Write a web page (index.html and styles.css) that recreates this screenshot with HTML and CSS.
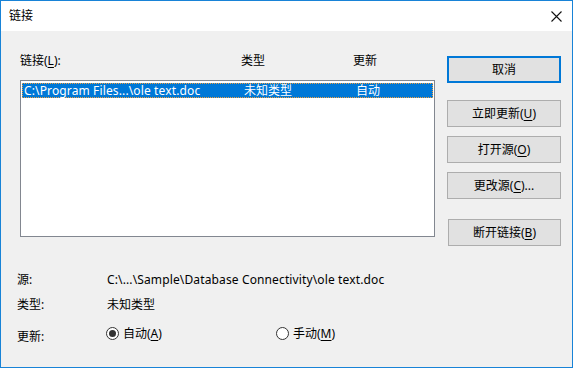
FILE: index.html
```html
<!DOCTYPE html>
<html lang="zh-CN">
<head>
    <meta charset="UTF-8">
    <title>链接</title>
    <link rel="stylesheet" href="styles.css">
</head>
<body>
    <div class="window">
        <div class="titlebar">
            <span class="title">链接</span>
            <span class="close">
                <svg width="11" height="11" viewBox="0 0 11 11"><path d="M0.5 0.5 L10.5 10.5 M10.5 0.5 L0.5 10.5" stroke="#111" stroke-width="1.1" fill="none"/></svg>
            </span>
        </div>

        <div class="client">
            <div class="main">
                <div class="links-panel">
                    <div class="list-header">
                        <span class="col-name">链接(<u>L</u>):</span>
                        <span class="col-type">类型</span>
                        <span class="col-update">更新</span>
                    </div>
                    <div class="list">
                        <div class="row selected">
                            <span class="col-name latin">C:\Program Files...\ole text.doc</span>
                            <span class="col-type">未知类型</span>
                            <span class="col-update">自动</span>
                        </div>
                    </div>
                </div>

                <div class="buttons">
                    <button class="btn default">取消</button>
                    <button class="btn btn-update">立即更新(<u>U</u>)</button>
                    <button class="btn btn-open">打开源(<u>O</u>)</button>
                    <button class="btn btn-change">更改源(<u>C</u>)...</button>
                    <button class="btn btn-break">断开链接(<u>B</u>)</button>
                </div>
            </div>

            <div class="info">
                <span class="info-label">源:</span>
                <span class="info-value latin">C:\...\Sample\Database Connectivity\ole text.doc</span>
                <span class="info-label row-type">类型:</span>
                <span class="info-value row-type">未知类型</span>
                <span class="info-label row-update">更新:</span>
                <div class="info-value row-update radios">
                    <label class="radio checked"><span class="dot"></span>自动(<u>A</u>)</label>
                    <label class="radio"><span class="dot"></span>手动(<u>M</u>)</label>
                </div>
            </div>
        </div>
    </div>
</body>
</html>
```

FILE: styles.css
```css
* {
    margin: 0;
    padding: 0;
    box-sizing: border-box;
}
body {
    font-family: 'Noto Sans', 'Noto Sans CJK SC', sans-serif;
    font-size: 12px;
    line-height: 16px;
    color: #000;
    background: #fff;
}
u {
    text-decoration: underline;
    text-underline-offset: 2px;
}
.latin {
    letter-spacing: 0.13px;
}

.window {
    width: 573px;
    height: 368px;
    border: 1px solid #1883d7;
    display: flex;
    flex-direction: column;
}

.titlebar {
    height: 30px;
    background: #fff;
    display: flex;
    align-items: center;
    justify-content: space-between;
    padding: 0 10px 0 8px;
}
.close {
    display: flex;
}

.client {
    flex: 1;
    background: #f0f0f0;
}

.main {
    display: flex;
    align-items: flex-start;
    padding-top: 22px;
}

.links-panel {
    margin-left: 19px;
    width: 415px;
}
.list-header, .row {
    display: flex;
}
.col-name {
    width: 220px;
}
.col-type {
    width: 112px;
}
.list-header .col-name {
    width: 221px;
}

.list {
    margin-top: 11px;
    height: 157px;
    background: #fff;
    border: 1px solid #828790;
    padding: 1px;
}
.row {
    height: 15px;
    line-height: 13px;
    margin-top: 1px;
    padding-left: 1px;
}
.row.selected {
    background: #0078d7;
    color: #fff;
    border: 1px dotted #f0a040;
}

.buttons {
    margin-left: 12px;
    width: 114px;
    display: flex;
    flex-direction: column;
    padding-top: 3px;
}
.btn {
    height: 27px;
    background: #e1e1e1;
    border: 1px solid #adadad;
    font: inherit;
    color: #000;
}
.btn.default {
    border: 2px solid #0078d7;
}
.btn-update {
    margin-top: 17px;
}
.btn-open, .btn-change {
    margin-top: 9px;
}
.btn-break {
    margin-top: 20px;
    margin-left: 1px;
}

.info {
    display: grid;
    grid-template-columns: 90px 1fr;
    grid-template-rows: 16px 16px 16px;
    row-gap: 9px;
    margin: 26px 0 0 16px;
}
.row-update {
    margin-top: 7px;
}
.radios {
    display: flex;
    margin-left: -1px;
}
.radio {
    display: flex;
    align-items: center;
    width: 170px;
}
.dot {
    width: 13px;
    height: 13px;
    border: 1px solid #333;
    border-radius: 50%;
    background: #fff;
    margin-right: 4px;
    display: flex;
    align-items: center;
    justify-content: center;
}
.radio.checked .dot::after {
    content: '';
    width: 7px;
    height: 7px;
    border-radius: 50%;
    background: #333;
}
```
